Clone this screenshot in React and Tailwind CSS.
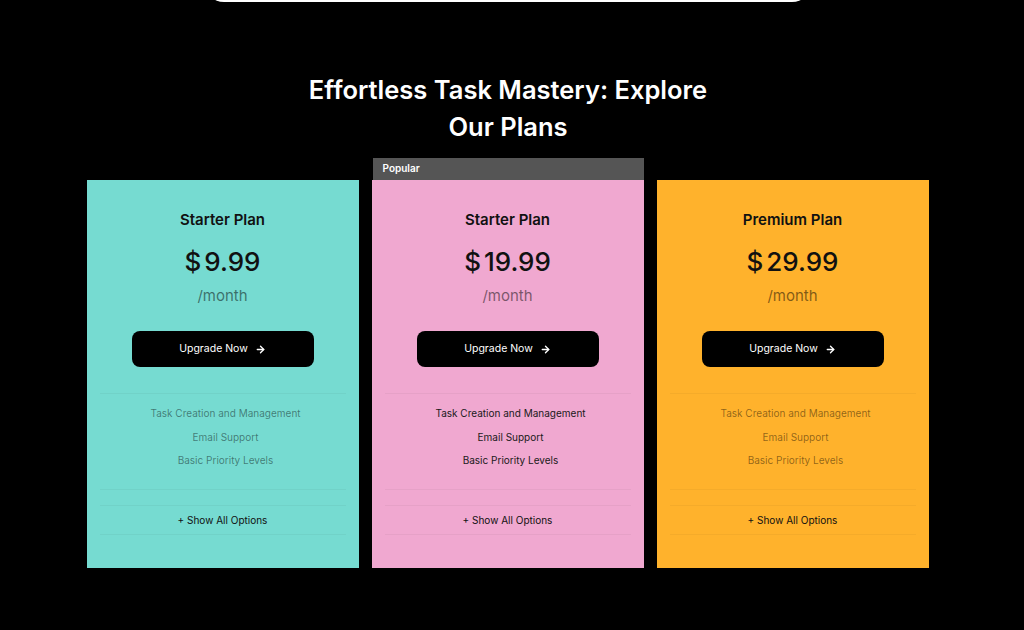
import { ArrowRight } from 'lucide-react'

const PLANS = [
  { name: 'Starter Plan', price: '9.99', bg: 'bg-[#76dbd1]', active: false },
  { name: 'Starter Plan', price: '19.99', bg: 'bg-[#f0a8d0]', active: true, popular: true },
  { name: 'Premium Plan', price: '29.99', bg: 'bg-[#ffb22c]', active: false },
]

const FEATURES = ['Task Creation and Management', 'Email Support', 'Basic Priority Levels']

export default function App() {
  return (
    <div className="h-[630px] overflow-hidden bg-black" style={{ fontFamily: 'Inter, "Noto Sans", sans-serif' }}>
      <div className="w-[1016px]">
        <div className="mx-auto -mt-[40px] h-[42px] w-[608px] rounded-b-[20px] rounded-t-none bg-white" />
        <h1 className="mx-auto mt-[69px] w-[420px] text-center text-[25.5px] font-semibold leading-[37px] text-white">
          Effortless Task Mastery: Explore Our Plans
        </h1>
        <div className="mx-auto mt-[13px] flex w-[843px] items-end gap-[13px]">
          {PLANS.map((plan, i) => (
            <PlanCard key={i} plan={plan} />
          ))}
        </div>
      </div>
    </div>
  )
}

function PlanCard({ plan }) {
  return (
    <div className="flex w-[272px] flex-col">
      {plan.popular ? (
        <div className="ml-px flex h-[22px] items-center bg-[#555555] px-[10px] pb-px text-[10px] font-semibold text-white">
          Popular
        </div>
      ) : (
        <div className="h-[22px]" />
      )}
      <div className={`${plan.bg} flex h-[388px] flex-col items-center px-[13px] pt-[30px]`}>
        <div className="text-[15px] font-semibold leading-[20px] text-[#111]">{plan.name}</div>
        <div className="mt-[17px] flex items-baseline text-[26px] font-medium leading-[30px] text-[#111]">
          <span className="mr-[3px]">$</span>
          <span>{plan.price}</span>
        </div>
        <div className="mt-[9px] text-[15px] leading-[20px] text-black/50">/month</div>
        <button
          type="button"
          className="mt-[25px] flex h-[36px] w-[182px] items-center justify-center gap-[7px] rounded-lg bg-black text-[10.5px] text-white"
        >
          Upgrade Now
          <ArrowRight size={11} strokeWidth={3} />
        </button>
        <div className="mt-[26px] w-full border-t border-black/[0.04]" />
        <div className={`flex w-full flex-col items-center gap-[9.5px] pl-[6px] pt-[12px] text-[10px] leading-[14px] ${plan.active ? 'text-[#1a1a1a]' : 'text-black/45'}`}>
          {FEATURES.map((f) => (
            <div key={f}>{f}</div>
          ))}
        </div>
        <div className="mt-[22px] w-full border-t border-black/[0.04]" />
        <div className="mt-[15px] w-full border-t border-black/[0.04]" />
        <div className="py-[7px] text-[10px] leading-[14px] text-[#111]">+ Show All Options</div>
        <div className="w-full border-t border-black/[0.04]" />
      </div>
    </div>
  )
}
